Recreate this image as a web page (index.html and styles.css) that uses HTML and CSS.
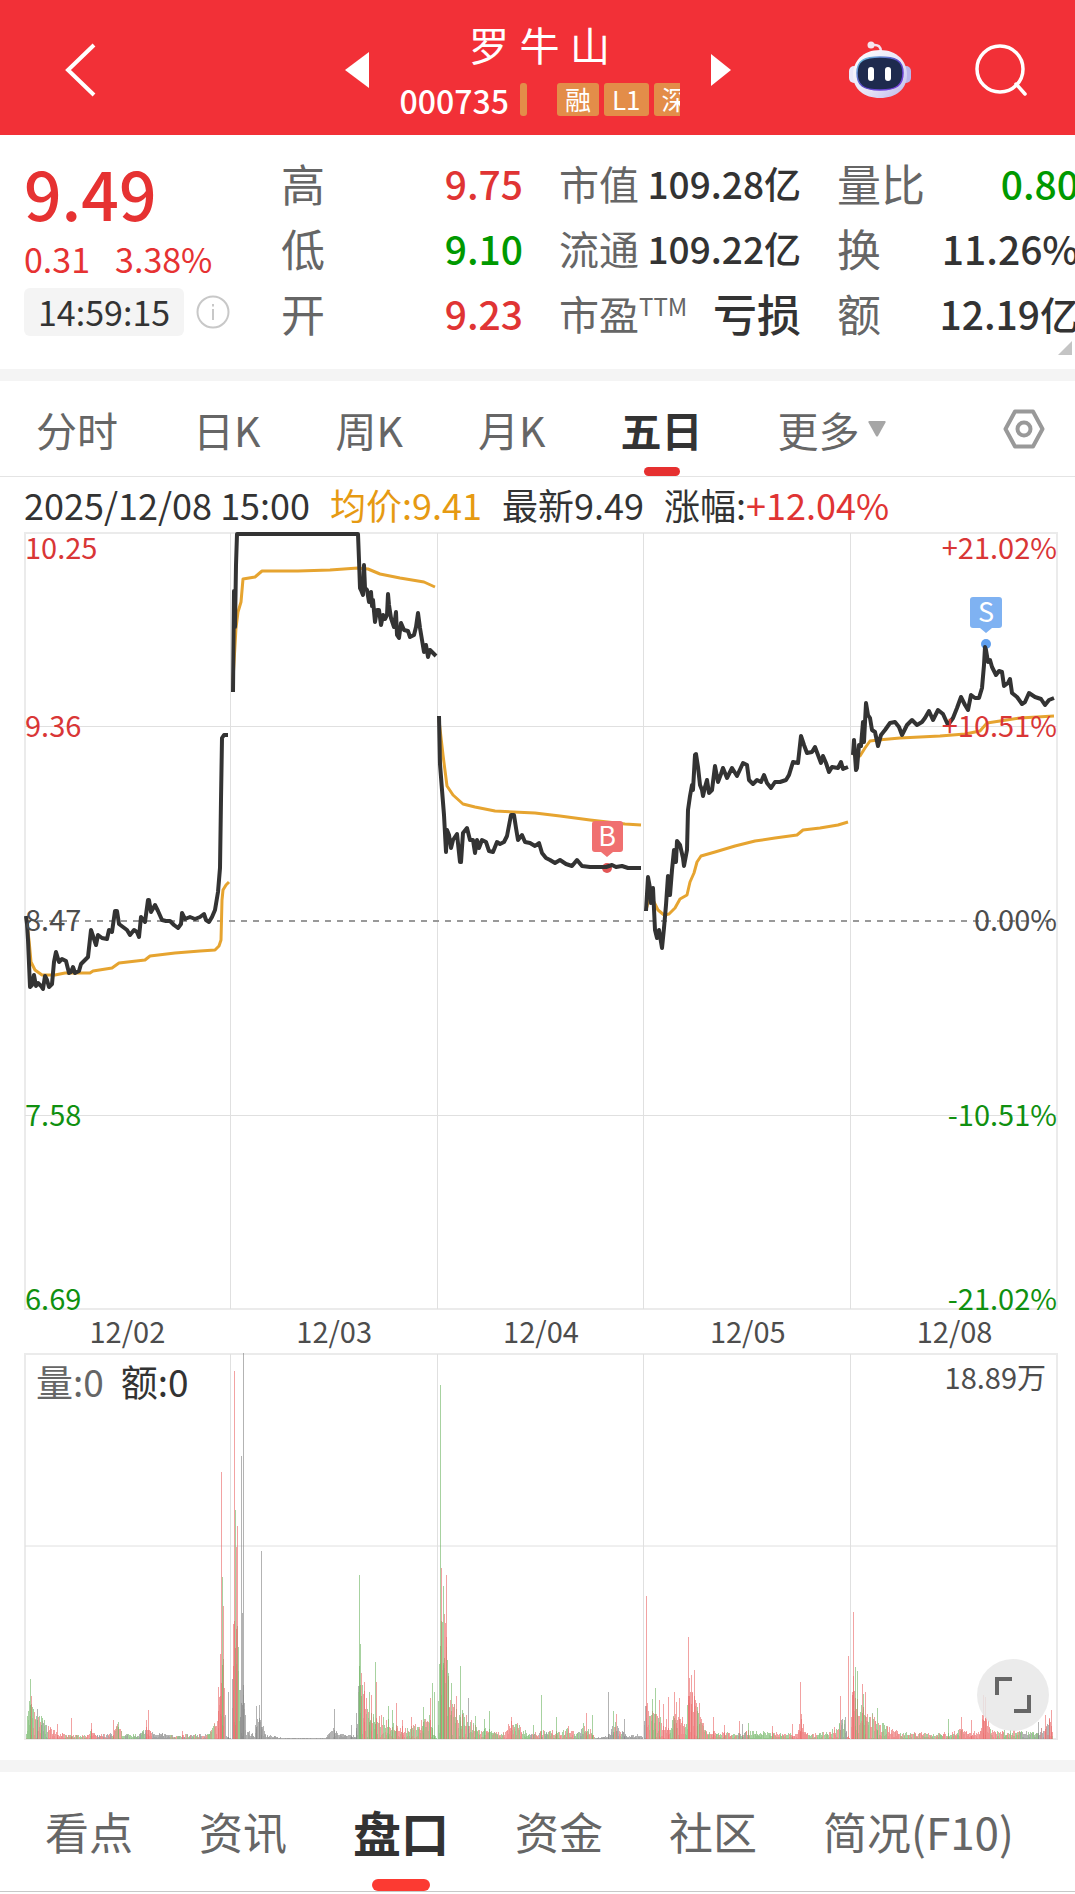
FILE: index.html
```html
<!DOCTYPE html>
<html lang="zh-CN">
<head>
    <meta charset="UTF-8">
    <meta name="viewport" content="width=device-width, initial-scale=1.0">
    <title>罗牛山 000735</title>
    <link rel="stylesheet" href="styles.css">
</head>
<body>
    <header class="header">
        <button class="icon-btn back-btn" aria-label="返回">
            <svg width="34" height="56" viewBox="0 0 34 56"><path d="M31 3 L5 28 L31 53" fill="none" stroke="#fff" stroke-width="4"/></svg>
        </button>
        <div class="stock">
            <button class="icon-btn" aria-label="上一只">
                <svg width="24" height="36" viewBox="0 0 24 36"><path d="M24 0 V36 L0 18 Z" fill="#fff"/></svg>
            </button>
            <div class="stock-info">
                <h1>罗 牛 山</h1>
                <div class="stock-code">
                    <span class="code">000735</span>
                    <div class="tags">
                        <span class="tag-end"></span>
                        <span class="tag">融</span>
                        <span class="tag">L1</span>
                        <span class="tag">深</span>
                    </div>
                </div>
            </div>
            <button class="icon-btn" aria-label="下一只">
                <svg width="20" height="32" viewBox="0 0 20 32"><path d="M0 0 V32 L20 16 Z" fill="#fff"/></svg>
            </button>
        </div>
        <div class="header-actions">
            <button class="icon-btn" aria-label="智能助手">
                <svg width="62" height="58" viewBox="0 0 62 58">
                    <defs>
                        <linearGradient id="shell" x1="0" y1="0" x2="1" y2="1">
                            <stop offset="0" stop-color="#fff"/>
                            <stop offset=".6" stop-color="#e4e2f6"/>
                            <stop offset="1" stop-color="#b9b5ea"/>
                        </linearGradient>
                        <linearGradient id="rim" x1="0" y1="0" x2="1" y2="1">
                            <stop offset="0" stop-color="#6fd0e0"/>
                            <stop offset=".5" stop-color="#5a48c8"/>
                            <stop offset="1" stop-color="#7a3ee0"/>
                        </linearGradient>
                    </defs>
                    <path d="M24 4 Q32 3 32 11" fill="none" stroke="#f3dfee" stroke-width="2.5"/>
                    <circle cx="22" cy="4" r="3.5" fill="#f6e4ee"/>
                    <rect x="0" y="25" width="10" height="17" rx="5" fill="#e9e8fa"/>
                    <rect x="52" y="25" width="10" height="17" rx="5" fill="#b9b5ea"/>
                    <path d="M31 9 C48 9 58 20 58 34 C58 48 47 57 31 57 C15 57 4 48 4 34 C4 20 14 9 31 9 Z" fill="url(#shell)"/>
                    <path d="M31 16 C46 16 54 19 54 32 C54 44 48 49 31 49 C14 49 8 44 8 32 C8 19 16 16 31 16 Z" fill="#1e2a4e" stroke="url(#rim)" stroke-width="1.5"/>
                    <rect x="19" y="26" width="6" height="14" rx="3" fill="#fff"/>
                    <rect x="36" y="26" width="6" height="14" rx="3" fill="#fff"/>
                </svg>
            </button>
            <button class="icon-btn" aria-label="搜索">
                <svg width="52" height="52" viewBox="0 0 52 52" fill="none" stroke="#fff" stroke-width="3.5"><circle cx="25" cy="25" r="23"/><path d="M41 40 L50 50" stroke-linecap="round"/></svg>
            </button>
        </div>
    </header>

    <section class="quote">
        <div class="price-box">
            <div class="price">9.49</div>
            <div class="change"><span>0.31</span><span>3.38%</span></div>
            <div class="time-row">
                <span class="time">14:59:15</span>
                <svg width="34" height="34" viewBox="0 0 34 34" fill="none" stroke="#c8c8c8" stroke-width="2"><circle cx="17" cy="17" r="15.5"/><path d="M17 14 V25 M17 9 V11.500"/></svg>
            </div>
        </div>
        <dl class="stats">
            <div><dt>高</dt><dd class="up">9.75</dd></div>
            <div><dt>低</dt><dd class="down">9.10</dd></div>
            <div><dt>开</dt><dd class="up">9.23</dd></div>
        </dl>
        <dl class="stats stats-mid">
            <div><dt>市值</dt><dd>109.28亿</dd></div>
            <div><dt>流通</dt><dd>109.22亿</dd></div>
            <div><dt>市盈<sup>TTM</sup></dt><dd class="loss">亏损</dd></div>
        </dl>
        <dl class="stats">
            <div><dt>量比</dt><dd class="down">0.80</dd></div>
            <div><dt>换</dt><dd>11.26%</dd></div>
            <div><dt>额</dt><dd>12.19亿</dd></div>
        </dl>
        <svg class="corner" width="14" height="14" viewBox="0 0 14 14"><path d="M14 0 V14 H0 Z" fill="#c4c4c4"/></svg>
    </section>

    <nav class="period-tabs">
        <button>分时</button>
        <button>日K</button>
        <button>周K</button>
        <button>月K</button>
        <button class="active">五日</button>
        <button class="more">更多<svg width="18" height="16" viewBox="0 0 18 16"><path d="M1 0 H17 Q18 0 17.500 1.500 L10 15 Q9 16 8 15 L.5 1.500 Q0 0 1 0 Z" fill="#a6a6a6"/></svg></button>
        <button class="settings" aria-label="设置">
            <svg width="42" height="40" viewBox="0 0 42 40" fill="none" stroke="#999" stroke-width="4" stroke-linejoin="round"><path d="M12 2.500 H30 L39.500 20 L30 37.500 H12 L2.500 20 Z"/><circle cx="21" cy="20" r="6.500"/></svg>
        </button>
    </nav>

    <main class="chart">
        <div class="legend">
            <span>2025/12/08 15:00</span>
            <span class="avg">均价:9.41</span>
            <span>最新9.49</span>
            <span>涨幅:<span class="up">+12.04%</span></span>
        </div>

        <svg class="price-chart" viewBox="24 532 1034 778">
            <g class="grid">
                <rect x="25" y="533" width="1032" height="776"/>
                <path d="M230.500 533 V1309 M437.500 533 V1309 M643.500 533 V1309 M850.500 533 V1309"/>
                <path d="M25 726.500 H1057 M25 1115.500 H1057"/>
            </g>
            <path class="base-line" d="M25 921 H1057"/>
            <g class="avg-line">
                <polyline points="26,917 29,940 31,962 35,970 42,975 55,975 65,973 90,973 93,971 112,968 119,963 145,960 150,956 175,953 200,951 215,950 219,946 221,940 222,900 223,890 226,885 229,882"/>
                <polyline points="233,680 236,628 238,612 241,602 243,579 255,577 262,571 298,571 330,570 358,568 368,569 380,574 400,578 424,582 435,587"/>
                <polyline points="439,720 443,755 447,786 453,795 463,804 475,807 495,811 535,813 560,816 590,820 625,824 641,825"/>
                <polyline points="646,910 649,899 653,900 658,910 664,915 669,914 675,908 680,899 687,895 690,882 694,873 697,862 701,856 715,852 735,846 755,841 775,838 797,835 803,830 820,828 838,825 848,822"/>
                <polyline points="853,754 860,756 865,748 870,741 878,740 900,738 940,736 965,734 980,731 987,723 1000,721 1020,718 1054,716"/>
            </g>
            <circle cx="607" cy="868" r="5" fill="#e25555"/>
            <circle cx="986" cy="644" r="5" fill="#5f9fee"/>
            <g class="price-line">
                <polyline points="26,916 27,924 28,940 30,987 32,985 34,975 36,986 38,983 41,986 43,989 45,976 47,980 49,987 52,984 54,962 56,952 59,962 62,959 66,961 69,973 71,972 73,967 75,973 79,971 81,964 85,960 88,957 91,930 93,936 96,945 98,935 102,938 107,939 109,930 112,932 115,911 117,911 119,924 123,927 127,930 130,935 134,930 137,932 139,937 141,917 145,922 148,900 149,900 151,912 155,905 158,911 162,920 166,921 170,921 174,925 178,928 181,924 182,913 185,919 190,917 195,919 200,917 204,914 206,920 209,922 212,917 215,910 218,892 220,868 221,800 222,738 224,735 228,735"/>
                <polyline points="233,692 234,591 235,627 236,565 237,534 358,534 359,560 360,588 361,590 363,595 364,565 365,588 367,590 369,602 371,592 372,606 373,600 375,622 377,610 379,610 381,625 383,615 385,619 387,615 388,594 389,605 391,618 394,627 396,612 397,635 399,638 401,623 404,630 408,631 410,637 414,635 416,627 418,613 420,628 422,640 424,652 426,645 428,657 430,650 432,652 436,656"/>
                <polyline points="439,716 440,764 442,790 444,815 446,852 447,830 449,835 451,848 453,840 457,834 460,862 461,862 463,833 467,828 470,840 473,840 475,853 477,840 479,848 482,840 486,842 489,851 493,852 497,842 500,844 504,842 507,836 511,815 514,815 516,828 518,840 522,835 525,842 530,843 535,846 539,843 542,853 546,858 550,860 555,863 560,860 566,864 572,866 577,860 582,866 590,867 606,867 612,865 616,867 622,866 628,868 641,868"/>
                <polyline points="646,911 648,877 650,888 651,903 653,888 655,930 657,938 659,930 662,948 664,928 666,905 668,876 670,895 672,870 674,850 676,862 677,841 680,845 683,858 684,866 687,850 688,810 690,796 692,785 693,790 695,755 696,754 698,767 700,785 702,790 703,796 705,787 707,780 709,793 712,790 715,766 718,782 721,774 723,768 727,778 732,768 737,776 743,763 747,765 749,780 753,784 757,780 761,782 764,775 767,783 771,788 775,782 780,782 786,780 789,775 793,762 798,763 801,736 804,745 807,753 812,752 815,747 818,755 821,763 823,756 826,763 829,772 832,767 838,768 841,762 843,769 848,767"/>
                <polyline points="853,755 854,740 856,770 857,768 859,745 861,746 863,722 864,742 866,703 868,715 870,718 872,730 875,732 878,746 881,735 885,730 890,723 895,722 899,727 902,735 907,725 912,720 917,725 922,722 925,718 929,711 933,720 938,710 943,714 948,725 953,718 957,708 961,697 965,705 968,710 971,695 975,698 979,698 982,688 984,665 985,647 986,650 988,662 990,660 992,667 996,675 999,671 1002,672 1004,686 1008,683 1010,679 1012,693 1017,697 1022,704 1025,702 1029,693 1035,697 1041,699 1045,705 1049,700 1054,698"/>
            </g>
            <path d="M595 821 H620 Q623 821 623 824 V849 Q623 852 620 852 H613 L607 857 L601 852 H595 Q592 852 592 849 V824 Q592 821 595 821 Z" fill="#f07070"/>
            <path d="M973 597 H999 Q1002 597 1002 600 V625 Q1002 628 999 628 H992 L986 633 L980 628 H973 Q970 628 970 625 V600 Q970 597 973 597 Z" fill="#7fb2f2"/>
            <g class="marks">
                <text x="607" y="846">B</text>
                <text x="986" y="622">S</text>
            </g>
            <g class="axis">
                <text class="up" x="25" y="559">10.25</text>
                <text class="up" x="25" y="737">9.36</text>
                <text x="25" y="931">8.47</text>
                <text class="down" x="25" y="1126">7.58</text>
                <text class="down" x="25" y="1310">6.69</text>
            </g>
            <g class="axis axis-right">
                <text class="up" x="1057" y="559">+21.02%</text>
                <text class="up" x="1057" y="737">+10.51%</text>
                <text x="1057" y="931">0.00%</text>
                <text class="down" x="1057" y="1126">-10.51%</text>
                <text class="down" x="1057" y="1310">-21.02%</text>
            </g>
        </svg>

        <div class="dates">
            <span>12/02</span>
            <span>12/03</span>
            <span>12/04</span>
            <span>12/05</span>
            <span>12/08</span>
        </div>

        <div class="volume">
            <svg viewBox="24 1353 1034 387">
                <g class="grid">
                    <rect x="25" y="1354" width="1032" height="385"/>
                    <path d="M230.500 1354 V1739 M437.500 1354 V1739 M643.500 1354 V1739 M850.500 1354 V1739 M25 1546 H1057"/>
                </g>
                <g id="bars"></g>
                <g class="axis axis-right"><text x="1046" y="1389">18.89万</text></g>
            </svg>
            <div class="volume-label"><span>量:0</span><span class="amount">额:0</span></div>
            <button class="expand-btn" aria-label="全屏">
                <svg width="38" height="38" viewBox="0 0 38 38" fill="none" stroke="#666" stroke-width="4"><path d="M3 19 V3 H18 M35 19 V35 H20"/></svg>
            </button>
        </div>
    </main>

    <nav class="bottom-tabs">
        <a href="#view">看点</a>
        <a href="#news">资讯</a>
        <a href="#order" class="active">盘口</a>
        <a href="#fund">资金</a>
        <a href="#club">社区</a>
        <a href="#f10">简况(F10)</a>
    </nav>

    <script>
        const colors = { r: '#ea6464', g: '#6cb460', k: '#808080' };
        const bottom = 1739;

        // general level of the volume: [x, height, colours to mix]
        const levels = [
            [26, 9, 'rg'], [29, 38, 'g'], [33, 28, 'rg'], [41, 16, 'gk'], [48, 9, 'r'], [56, 6, 'r'], [65, 3, 'rg'],
            [86, 3, 'rg'], [91, 7, 'r'], [97, 3, 'rk'], [112, 4, 'rg'], [117, 11, 'rg'], [122, 4, 'gk'], [138, 3, 'gk'],
            [146, 9, 'r'], [152, 6, 'k'], [170, 3, 'rgk'], [206, 4, 'rg'], [215, 12, 'r'], [218, 36, 'r'], [222, 100, 'rg'], [225, 30, 'k'], [226, 3, 'k'],
            [231, 0, 'k'], [233, 110, 'r'], [237, 110, 'rg'], [240, 36, 'k'], [243, 55, 'k'], [246, 6, 'k'], [254, 4, 'k'],
            [257, 26, 'k'], [261, 14, 'k'], [266, 3, 'k'], [285, 1, 'k'], [325, 1, 'k'], [333, 8, 'k'], [340, 4, 'k'],
            [355, 3, 'k'], [357, 25, 'gk'], [359, 75, 'g'], [363, 54, 'rg'], [368, 27, 'rg'], [380, 18, 'rg'], [388, 16, 'rg'],
            [398, 9, 'rg'], [410, 8, 'rg'], [420, 13, 'rg'], [429, 26, 'rg'], [433, 4, 'g'], [437, 0, 'g'],
            [439, 112, 'g'], [445, 115, 'rg'], [449, 50, 'rg'], [457, 24, 'rg'], [468, 15, 'rg'], [478, 9, 'rg'], [490, 7, 'rg'],
            [504, 5, 'r'], [511, 17, 'rg'], [522, 7, 'g'], [530, 4, 'rgk'], [547, 7, 'rg'], [560, 5, 'rg'], [569, 10, 'rg'],
            [575, 3, 'gk'], [584, 12, 'rg'], [592, 6, 'rg'], [595, 1, 'k'], [607, 2, 'k'], [614, 12, 'rgk'], [622, 6, 'k'],
            [628, 2, 'k'], [640, 4, 'k'], [643, 0, 'k'], [646, 50, 'r'], [649, 25, 'rg'], [656, 33, 'rg'], [661, 14, 'r'],
            [670, 14, 'rg'], [679, 23, 'r'], [685, 8, 'g'], [688, 46, 'r'], [694, 43, 'r'], [698, 25, 'rg'], [704, 8, 'rg'],
            [716, 5, 'rg'], [735, 5, 'rgk'], [750, 6, 'g'], [771, 5, 'rg'], [795, 4, 'r'], [801, 14, 'r'], [808, 3, 'rg'],
            [830, 6, 'rg'], [839, 12, 'gk'], [845, 16, 'k'], [847, 3, 'r'], [850, 0, 'r'], [853, 60, 'r'], [858, 38, 'rg'],
            [866, 26, 'rg'], [876, 14, 'rg'], [887, 9, 'r'], [900, 5, 'rg'], [915, 5, 'rg'], [935, 4, 'rg'], [952, 5, 'rg'],
            [962, 10, 'r'], [968, 4, 'r'], [980, 7, 'r'], [984, 26, 'r'], [990, 7, 'rg'], [1020, 6, 'gk'], [1040, 6, 'rk'],
            [1051, 19, 'rg'], [1053, 3, 'r']
        ];

        // single tall bars: [x, height, colour]
        const spikes = [
            [30, 60, 'g'], [31, 43, 'r'], [37, 30, 'k'], [41, 23, 'g'], [57, 15, 'r'], [71, 21, 'r'], [91, 16, 'r'],
            [113, 19, 'r'], [118, 17, 'g'], [146, 19, 'r'], [148, 29, 'r'], [182, 8, 'r'], [218, 52, 'r'], [220, 85, 'r'],
            [221, 267, 'r'], [222, 162, 'g'], [223, 133, 'r'], [228, 47, 'k'],
            [233, 115, 'r'], [234, 368, 'r'], [235, 229, 'g'], [236, 192, 'r'], [237, 213, 'r'], [240, 49, 'k'],
            [241, 283, 'k'], [242, 126, 'k'], [243, 386, 'k'], [256, 33, 'k'], [259, 34, 'k'], [261, 188, 'k'],
            [334, 30, 'k'], [351, 14, 'k'], [356, 26, 'k'], [359, 164, 'g'], [360, 95, 'g'], [361, 66, 'r'], [364, 57, 'r'],
            [369, 47, 'g'], [371, 44, 'r'], [375, 77, 'g'], [376, 57, 'r'], [388, 33, 'g'], [392, 29, 'g'], [396, 36, 'r'],
            [402, 19, 'r'], [411, 22, 'r'], [423, 32, 'g'], [430, 41, 'r'], [432, 56, 'g'], [434, 47, 'g'],
            [440, 354, 'g'], [441, 171, 'r'], [443, 153, 'g'], [444, 125, 'r'], [446, 164, 'r'], [448, 66, 'g'],
            [451, 56, 'g'], [456, 43, 'r'], [460, 73, 'g'], [462, 25, 'r'], [468, 41, 'k'], [475, 23, 'g'], [484, 20, 'g'],
            [489, 28, 'g'], [511, 22, 'r'], [533, 14, 'g'], [541, 44, 'g'], [556, 22, 'g'], [586, 26, 'r'], [592, 24, 'g'],
            [608, 47, 'k'], [613, 28, 'g'], [616, 25, 'r'], [624, 20, 'k'],
            [646, 143, 'r'], [652, 40, 'g'], [655, 51, 'g'], [659, 39, 'r'], [663, 35, 'r'], [668, 42, 'r'], [674, 47, 'r'],
            [676, 37, 'r'], [679, 41, 'r'], [688, 102, 'r'], [689, 61, 'r'], [691, 64, 'r'], [694, 69, 'r'], [697, 32, 'g'],
            [699, 36, 'r'], [713, 22, 'r'], [724, 14, 'r'], [739, 18, 'r'], [742, 15, 'k'], [748, 16, 'g'], [772, 13, 'r'],
            [792, 15, 'r'], [800, 57, 'r'], [801, 25, 'r'], [840, 43, 'r'], [848, 83, 'r'],
            [852, 47, 'r'], [853, 127, 'r'], [855, 72, 'g'], [857, 68, 'g'], [862, 55, 'r'], [863, 45, 'g'], [865, 47, 'r'],
            [877, 31, 'g'], [948, 20, 'g'], [961, 22, 'r'], [971, 19, 'r'], [983, 44, 'r'], [985, 42, 'r'], [1038, 17, 'k'],
            [1045, 24, 'r'], [1049, 20, 'r'], [1051, 29, 'r']
        ];

        let seed = 7;
        function random() {
            seed = (seed * 16807) % 2147483647;
            return seed / 2147483647;
        }

        function bar(x, height, color, opacity) {
            return `<rect x="${x}" y="${bottom - height}" width="1" height="${height}" fill="${colors[color]}" opacity="${opacity}"/>`;
        }

        let html = '';
        for (let i = 0; i < levels.length - 1; i++) {
            const [x1, h1, mix] = levels[i];
            const [x2, h2] = levels[i + 1];
            for (let x = x1; x < x2; x++) {
                const level = h1 + (h2 - h1) * (x - x1) / (x2 - x1);
                if (level === 0) continue;
                const wide = level < 20 ? 0.9 : 0.5;
                const height = Math.max(1, Math.round(level * (0.6 + random() * wide)));
                html += bar(x, height, mix[Math.floor(random() * mix.length)], 0.6);
                // neighbouring minutes share a pixel, so a second bar shows through
                html += bar(x, Math.round(height * random()), mix[Math.floor(random() * mix.length)], 0.3);
            }
        }
        spikes.forEach(([x, height, color]) => {
            html += bar(x, height, color, 0.6);
        });
        document.getElementById('bars').innerHTML = html;
    </script>
</body>
</html>
```
FILE: styles.css
```css
* {
    box-sizing: border-box;
}

body {
    margin: 0;
    background-color: #fff;
    color: #333;
    font-family: "Noto Sans CJK SC", "Noto Sans", sans-serif;
    overflow-x: hidden;
}

button {
    padding: 0;
    border: none;
    background: none;
    font-family: inherit;
    color: inherit;
    cursor: pointer;
}

svg {
    display: block;
}

.up {
    color: #e03434;
    fill: #d93636;
}

.down {
    color: #009900;
    fill: #109010;
}

/* header */
.header {
    display: grid;
    grid-template-columns: 1fr auto 1fr;
    align-items: center;
    height: 135px;
    padding: 4px 48px 0;
    background-color: #f23037;
    color: #fff;
}

.icon-btn {
    display: block;
    flex: none;
}

.back-btn {
    justify-self: start;
    margin-left: 15px;
}

.stock {
    display: flex;
    align-items: center;
    gap: 31px;
}

.stock-info {
    width: 280px;
}

.stock-info h1 {
    margin: 0;
    font-size: 40px;
    font-weight: 400;
    line-height: 56px;
    text-align: center;
    font-family: "Noto Sans", "Noto Sans CJK SC", sans-serif;
}

.stock-code {
    display: flex;
    align-items: center;
    gap: 11px;
    height: 48px;
    padding-top: 4px;
}

.code {
    font-size: 32px;
    font-weight: 500;
    line-height: 44px;
}

.tags {
    display: flex;
    flex: 1;
    gap: 5px;
    overflow: hidden;
}

.tag,
.tag-end {
    flex: none;
    height: 33px;
    border-radius: 3px;
    background-color: #e38d49;
}

.tag {
    padding: 0 8px;
    font-size: 26px;
    line-height: 32px;
}

.tag-end {
    width: 7px;
    margin-right: 25px;
}

.header-actions {
    display: flex;
    align-items: center;
    justify-content: flex-end;
    gap: 64px;
}

/* quote */
.quote {
    position: relative;
    display: flex;
    gap: 36px;
    height: 246px;
    padding: 15px 0 0 24px;
    border-bottom: 12px solid #f4f4f4;
    overflow: hidden;
}

.price-box {
    flex: none;
    width: 221px;
    color: #e63232;
}

.price {
    font-size: 66px;
    font-weight: 500;
    line-height: 84px;
}

.change {
    display: flex;
    gap: 25px;
    margin-top: 8px;
    font-size: 34px;
    line-height: 34px;
}

.time-row {
    display: flex;
    align-items: center;
    gap: 12px;
    margin-top: 12px;
}

.time {
    padding: 0 14px;
    border-radius: 6px;
    background-color: #f4f4f4;
    color: #333;
    font-size: 34px;
    line-height: 48px;
}

.stats {
    flex: none;
    width: 242px;
    margin: 0;
}

.stats div {
    display: flex;
    align-items: center;
    justify-content: space-between;
    height: 65px;
    white-space: nowrap;
}

.stats dt {
    color: #666;
    font-size: 44px;
}

.stats dd {
    margin: 0;
    font-size: 39px;
    font-weight: 500;
}

.stats-mid dt {
    font-size: 40px;
}

.stats-mid dd {
    font-size: 37px;
}

.stats-mid .loss {
    font-size: 44px;
}

.stats sup {
    font-size: 24px;
    line-height: 24px;
}

.corner {
    position: absolute;
    right: 3px;
    bottom: 14px;
}

/* period tabs */
.period-tabs {
    display: flex;
    align-items: center;
    gap: 75px;
    height: 96px;
    padding: 0 30px 0 36px;
    border-bottom: 1px solid #e4e4e4;
    color: #666;
}

.period-tabs button {
    position: relative;
    font-size: 41px;
    line-height: 94px;
    white-space: nowrap;
}

.period-tabs .active,
.bottom-tabs .active {
    color: #333;
    font-weight: 700;
}

.period-tabs .active::after,
.bottom-tabs .active::after {
    content: "";
    position: absolute;
    left: 50%;
    bottom: 0;
    transform: translateX(-50%);
    background-color: #e63030;
}

.period-tabs .active::after {
    width: 36px;
    height: 9px;
    border-radius: 5px;
}

.period-tabs .more {
    display: flex;
    align-items: center;
    gap: 8px;
}

.period-tabs .settings {
    margin-left: auto;
}

/* chart */
.chart {
    padding: 0 17px 20px 24px;
    border-bottom: 12px solid #f4f4f4;
}

.legend {
    display: flex;
    gap: 20px;
    height: 55px;
    font-size: 36px;
    line-height: 55px;
    white-space: nowrap;
}

.avg {
    color: #e69a12;
}

.price-chart,
.volume svg {
    width: 100%;
}

.grid {
    fill: none;
    stroke: #e0e0e0;
    stroke-width: 1;
}

.grid rect {
    stroke: #ebebeb;
    stroke-width: 2;
}

.base-line {
    stroke: #999;
    stroke-width: 2;
    stroke-dasharray: 6 6;
}

.avg-line,
.price-line {
    fill: none;
    stroke: #e6a430;
    stroke-width: 3;
    stroke-linejoin: round;
}

.price-line {
    stroke: #333;
    stroke-width: 4;
}

.axis {
    font-size: 29px;
}

.axis text:not([class]) {
    fill: #4d4d4d;
}

.axis-right {
    text-anchor: end;
}

.marks {
    fill: #fff;
    font-size: 27px;
    text-anchor: middle;
}

.dates {
    display: grid;
    grid-template-columns: repeat(5, 1fr);
    height: 43px;
    color: #4d4d4d;
    font-size: 29px;
    line-height: 40px;
    text-align: center;
}

.volume {
    position: relative;
}

.volume-label {
    position: absolute;
    top: 4px;
    left: 12px;
    display: flex;
    gap: 17px;
    color: #666;
    font-size: 37px;
    line-height: 48px;
}

.amount {
    color: #333;
}

.volume .expand-btn {
    position: absolute;
    right: 9px;
    bottom: 9px;
    display: flex;
    align-items: center;
    justify-content: center;
    width: 72px;
    height: 72px;
    border-radius: 50%;
    background-color: rgba(232, 232, 232, 0.85);
}

.expand-btn svg {
    width: 38px;
}

/* bottom tabs */
.bottom-tabs {
    display: flex;
    align-items: center;
    gap: 66px;
    height: 120px;
    padding: 0 45px;
    border-bottom: 1px solid #c8c8c8;
}

.bottom-tabs a {
    position: relative;
    color: #666;
    font-size: 44px;
    line-height: 119px;
    text-decoration: none;
    white-space: nowrap;
}

.bottom-tabs .active {
    font-size: 48px;
}

.bottom-tabs .active::after {
    width: 58px;
    height: 12px;
    border-radius: 6px;
    background-color: #fc3a32;
}
```
